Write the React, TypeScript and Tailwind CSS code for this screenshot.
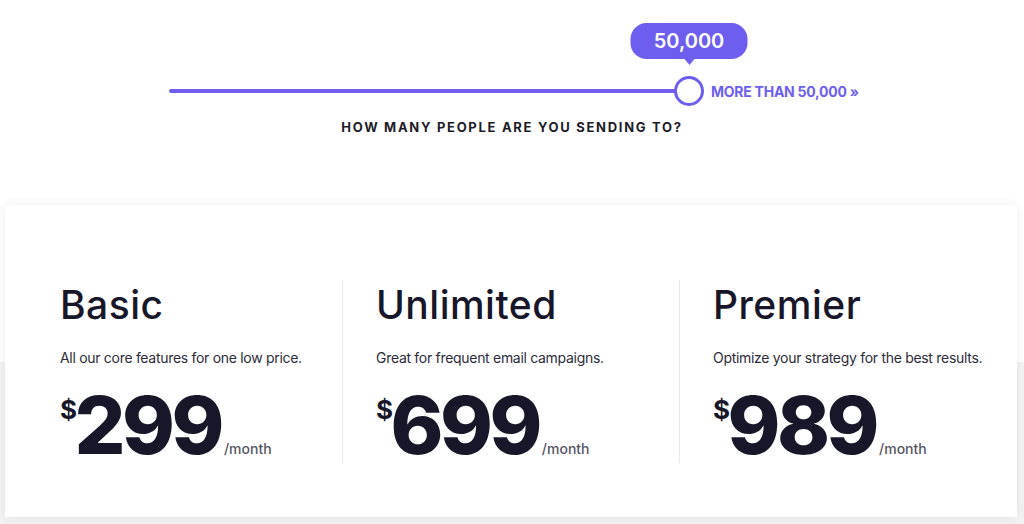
import React from "react";

const plans = [
  { name: "Basic", desc: "All our core features for one low price.", price: "299" },
  { name: "Unlimited", desc: "Great for frequent email campaigns.", price: "699" },
  { name: "Premier", desc: "Optimize your strategy for the best results.", price: "989" },
];

export default function App() {
  return (
    <div
      className="w-[1024px] h-[524px] overflow-hidden bg-[linear-gradient(to_bottom,#ffffff_0px,#ffffff_362px,#f2f2f3_362px)] text-[#171729]"
      style={{ fontFamily: "Inter, 'Noto Sans', sans-serif" }}
    >
      {/* slider section */}
      <div className="h-[205px] pt-[76px]">
        <div className="ml-[169px] flex items-center h-[30px]">
          <div className="w-[507px] h-[4px] rounded-full bg-[#6e5ef0]" />
          <div className="relative -ml-[2px] w-[30px] h-[30px] rounded-full border-[3px] border-[#6e5ef0] bg-white shrink-0">
            <div className="absolute bottom-[calc(100%+20px)] left-1/2 -translate-x-1/2 w-[117px] h-[36px] rounded-[16px] bg-[#6e5ef0] flex items-center justify-center text-white text-[20px] font-semibold">
              50,000
              <div className="absolute top-full left-1/2 -translate-x-1/2 w-0 h-0 border-l-[5px] border-r-[5px] border-t-[6px] border-l-transparent border-r-transparent border-t-[#6e5ef0]" />
            </div>
          </div>
          <div className="ml-[7px] text-[14px] font-bold tracking-[-0.25px] text-[#6e5ef0] whitespace-nowrap">
            MORE THAN 50,000 »
          </div>
        </div>
        <div className="mt-[12px] text-center text-[13px] font-bold tracking-[1.7px] text-[#1c1c28]">
          HOW MANY PEOPLE ARE YOU SENDING TO?
        </div>
      </div>

      {/* pricing card */}
      <div className="ml-[5px] w-[1012px] h-[312px] bg-white shadow-[0_0_10px_rgba(0,0,0,0.07)] pt-[75px]">
        <div className="flex h-[183px]">
          {plans.map((p, i) => (
            <div
              key={p.name}
              className={
                i === 0
                  ? "w-[337px] pl-[55px] pt-[5px]"
                  : "w-[337px] pl-[33px] pt-[5px] border-l border-[#e9e9ec]"
              }
            >
              <div className="text-[39px] leading-none font-medium tracking-[0.5px]">{p.name}</div>
              <div className="mt-[24px] text-[14px] leading-[20px] text-[#2c2c38] tracking-[-0.3px] whitespace-nowrap">
                {p.desc}
              </div>
              <div className="mt-[17px] flex items-baseline">
                <span className="self-start mt-[12px] text-[26px] leading-none font-bold tracking-[-2.5px]">$</span>
                <span className="text-[80px] leading-none font-extrabold tracking-[-3.5px]">{p.price}</span>
                <span className="ml-[3px] text-[14px] font-medium text-[#55555f]">/month</span>
              </div>
            </div>
          ))}
        </div>
      </div>
    </div>
  );
}
